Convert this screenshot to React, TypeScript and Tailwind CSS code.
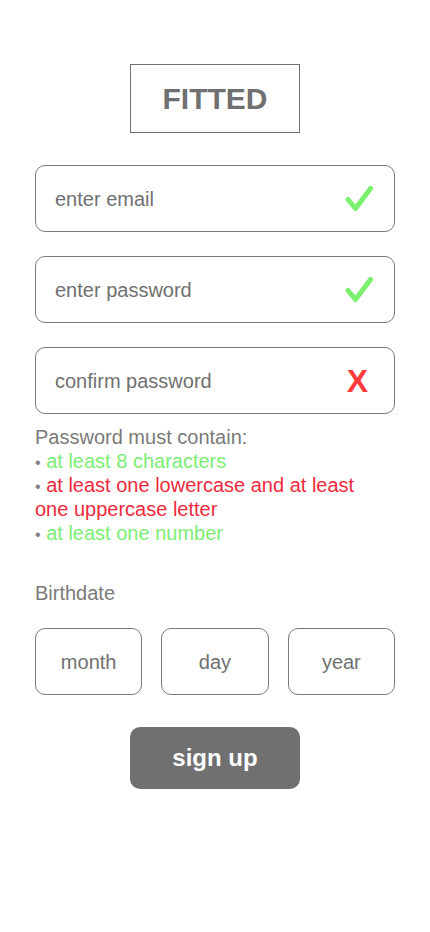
import React from "react";

const font = { fontFamily: '"Liberation Sans", Arial, sans-serif' };

const Check = () => (
  <svg width="30" height="28" viewBox="0 0 30 28" fill="none" aria-label="valid">
    <path d="M4 14.5 L11.5 23.5 L26.5 3.5" stroke="#7bf06f" strokeWidth="5" strokeLinecap="round" strokeLinejoin="round" />
  </svg>
);

const Field = ({ placeholder, status }: { placeholder: string; status: "ok" | "bad" }) => (
  <div className="flex h-[67px] items-center justify-between rounded-[10px] border border-[#7a7a7a] pl-[19px] pr-[20px]">
    <span className="text-[20px] text-[#707070]">{placeholder}</span>
    {status === "ok" ? (
      <Check />
    ) : (
      <span className="pr-[6px] text-[32px] font-bold leading-none text-[#ff3b3b]">X</span>
    )}
  </div>
);

const rules = [
  { text: "at least 8 characters", ok: true },
  { text: "at least one lowercase and at least one uppercase letter", ok: false },
  { text: "at least one number", ok: true },
];

export default function App() {
  return (
    <div className="min-h-[932px] w-[430px] bg-white px-[35px] pt-[64px]" style={font}>
      <div className="mx-auto flex h-[69px] w-[170px] items-center justify-center border border-[#707070]">
        <span className="text-[30px] font-bold text-[#707070]">FITTED</span>
      </div>

      <div className="mt-[32px] flex flex-col gap-[24px]">
        <Field placeholder="enter email" status="ok" />
        <Field placeholder="enter password" status="ok" />
        <Field placeholder="confirm password" status="bad" />
      </div>

      <div className="mt-[11px] pr-[20px] text-[20px] leading-[24px]">
        <p className="text-[#7a7a7a]">Password must contain:</p>
        {rules.map((r) => (
          <p key={r.text} className={r.ok ? "text-[#7ced73]" : "text-[#ee2a3c]"}>
            <span className="text-[16px] leading-none text-[#808080]">•</span> {r.text}
          </p>
        ))}
      </div>

      <p className="mt-[36px] text-[20px] leading-[24px] text-[#7a7a7a]">Birthdate</p>

      <div className="mt-[23px] grid grid-cols-3 gap-[19px]">
        {["month", "day", "year"].map((d) => (
          <div key={d} className="flex h-[67px] items-center justify-center rounded-[10px] border border-[#7a7a7a]">
            <span className="text-[20px] text-[#707070]">{d}</span>
          </div>
        ))}
      </div>

      <button className="mx-auto mt-[32px] flex h-[62px] w-[170px] items-center justify-center rounded-[10px] bg-[#707070]">
        <span className="text-[24px] font-bold text-white">sign up</span>
      </button>
    </div>
  );
}
